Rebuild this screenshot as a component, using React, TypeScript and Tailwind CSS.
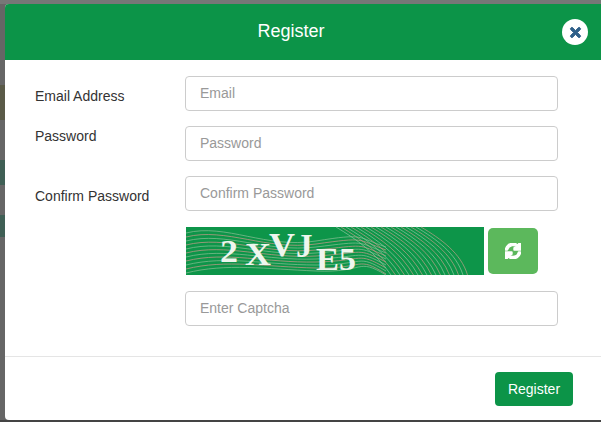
import { FaSync, FaTimes } from "react-icons/fa"

const rows = [
  { label: "Email Address", placeholder: "Email", labelClass: "pt-[10px]" },
  { label: "Password", placeholder: "Password", labelClass: "pt-0" },
  { label: "Confirm Password", placeholder: "Confirm Password", labelClass: "pt-[10px]" },
]

const inputClass =
  "block w-[373px] h-[35px] rounded-[4px] border border-[#cccccc] bg-white pl-[14px] pr-[15px] pb-[2px] text-[14px] text-[#555] placeholder:text-[#999] outline-none"

function Captcha() {
  const waves = [0, 1, 2, 3, 4, 5, 6, 7, 8, 9, 10]
  const arcs = [0, 1, 2, 3, 4, 5, 6, 7, 8, 9, 10, 11, 12, 13, 14, 15, 16, 17]
  return (
    <svg width="298" height="48" viewBox="0 0 298 48" className="block overflow-visible">
      <rect width="298" height="48" fill="#0d9549" />
      {waves.map((i) => (
        <path
          key={i}
          d={`M0 ${6 + i * 4} C40 ${i * 4 - 4} 80 ${22 + i * 2} 130 ${14 + i * 3} S170 ${10 + i * 2} 200 ${Math.min(48, 20 + i * 3)}`}
          fill="none"
          stroke={i % 2 ? "#d09a8c" : "#8cc096"}
          strokeWidth="0.7"
        />
      ))}
      {arcs.map((i) => (
        <path
          key={i}
          d={`M${150 + i * 5} 0 C${170 + i * 5} 12 ${190 + i * 5} 26 ${205 + i * 4.5} 48`}
          fill="none"
          stroke={i % 2 ? "#c0a08a" : "#92c8a2"}
          strokeWidth="0.7"
        />
      ))}
      <g fill="#eef6ee" fontFamily="'Liberation Serif', serif" fontWeight="700">
        <text x="34" y="35" fontSize="32" textLength="18" lengthAdjust="spacingAndGlyphs">2</text>
        <text x="59" y="38" fontSize="32" textLength="26" lengthAdjust="spacingAndGlyphs">X</text>
        <text x="83" y="29" fontSize="33" textLength="26" lengthAdjust="spacingAndGlyphs">V</text>
        <text x="110" y="30" fontSize="33">J</text>
        <text x="130" y="43" fontSize="32" textLength="23" lengthAdjust="spacingAndGlyphs">E</text>
        <text x="153" y="43" fontSize="32" textLength="17" lengthAdjust="spacingAndGlyphs">5</text>
      </g>
    </svg>
  )
}

export default function App() {
  return (
    <div className="w-[601px] h-[422px] overflow-hidden pt-[4px] pl-[5px] pb-[2px] font-['Liberation_Sans',Arial,sans-serif] bg-[linear-gradient(to_bottom,#777777_0px,#777777_4px,#666666_4px,#666666_85px,#5a5a48_85px,#5a5a48_120px,#666666_120px,#666666_160px,#3f5f55_160px,#3f5f55_185px,#666666_185px,#666666_215px,#3f5f55_215px,#3f5f55_237px,#666666_237px,#666666_420px,#444444_420px)]">
      <div className="h-[416px] bg-white rounded-l-[4px] overflow-hidden">
        <div className="relative h-[56px] bg-[#0c9448] flex items-center justify-center pr-[24px] pb-[2px] text-white text-[18px]">
          Register
          <button className="absolute right-[13px] top-[15px] w-[26px] h-[26px] rounded-full bg-white flex items-center justify-center text-[#2f6089] text-[15px]">
            <FaTimes strokeWidth={30} />
          </button>
        </div>

        <div className="pl-[30px] pt-[16px] pb-[30px] border-b border-[#e5e5e5]">
          <div className="flex flex-col gap-[15px]">
            {rows.map((r) => (
              <div key={r.label} className="flex items-start">
                <label className={`w-[150px] text-[14px] leading-[20px] text-[#333] ${r.labelClass}`}>{r.label}</label>
                <input type="text" placeholder={r.placeholder} className={inputClass} />
              </div>
            ))}
          </div>
          <div className="ml-[151px] mt-[16px] flex items-center gap-[4px]">
            <Captcha />
            <button className="w-[50px] h-[46px] rounded-[5px] bg-[#5cb85c] flex items-center justify-center text-white text-[16px]">
              <FaSync strokeWidth={45} />
            </button>
          </div>
          <div className="ml-[150px] mt-[16px]">
            <input type="text" placeholder="Enter Captcha" className={inputClass} />
          </div>
        </div>

        <div className="flex justify-end pt-[15px] pr-[28px]">
          <button className="w-[78px] h-[34px] rounded-[4px] bg-[#0c9448] text-white text-[14px]">Register</button>
        </div>
      </div>
    </div>
  )
}
